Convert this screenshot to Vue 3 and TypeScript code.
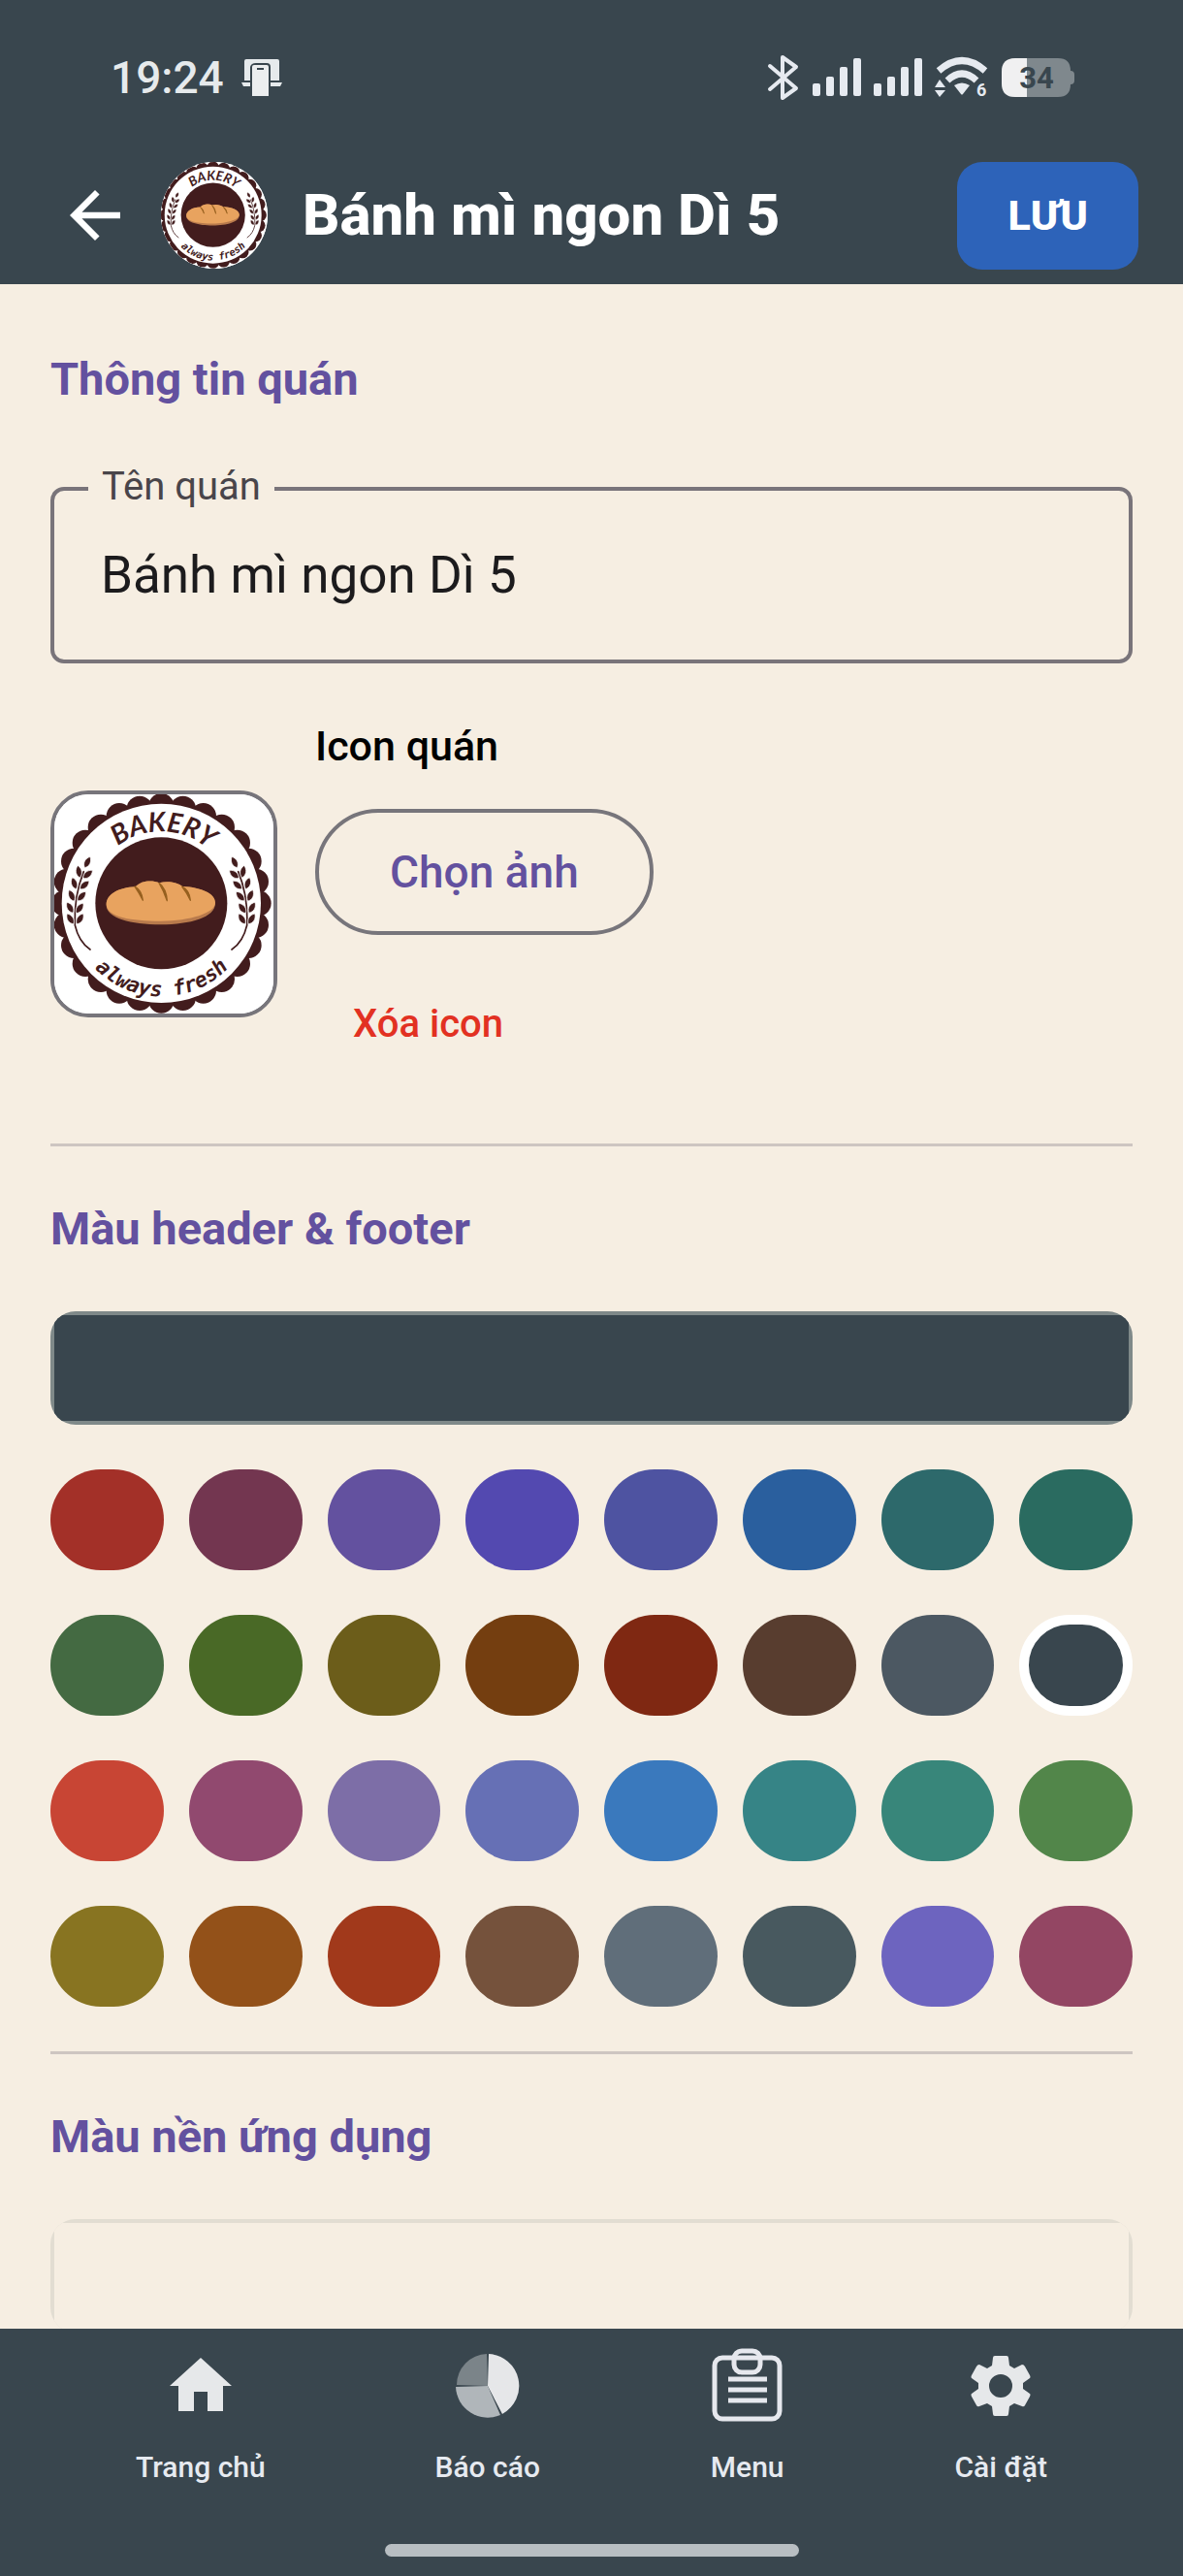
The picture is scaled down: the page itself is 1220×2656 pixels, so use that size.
<script setup lang="ts">
import { computed, ref } from 'vue'

const shopName = ref('Bánh mì ngon Dì 5')
const title = computed(() => shopName.value)

const headerColors: string[] = [
  '#a33028', '#733650', '#63519f', '#5349b0', '#4e53a1', '#2a5f9e', '#2d696b', '#2a6b60',
  '#446a42', '#496926', '#6c5d1a', '#743e10', '#7f2812', '#583d2f', '#4c5862', '#39464e',
  '#c84534', '#91496f', '#7d6ea7', '#6670b5', '#3a79bd', '#368486', '#38867a', '#52864a',
  '#887421', '#935119', '#a1391b', '#75523c', '#606e7a', '#48595f', '#6d64bf', '#934663',
]
const headerColor = ref('#39464e')
const appColor = ref('#f6eee2')

const scallops = Array.from({ length: 28 }, (_, i) => {
  const a = (i * 2 * Math.PI) / 28
  return { x: Math.round(380 + 300 * Math.sin(a)), y: Math.round(394 - 300 * Math.cos(a)) }
})

const leaves = [
  { x: 99, y: 443, a: -32 }, { x: 128, y: 443, a: 32 },
  { x: 98, y: 408, a: -30 }, { x: 127, y: 410, a: 36 },
  { x: 103, y: 371, a: -24 }, { x: 133, y: 373, a: 42 },
  { x: 111, y: 333, a: -18 }, { x: 142, y: 338, a: 48 },
  { x: 125, y: 297, a: -10 }, { x: 152, y: 305, a: 50 },
  { x: 151, y: 268, a: 26 },
]
</script>

<template>
  <div class="app">
    <svg class="defs" width="0" height="0" aria-hidden="true">
      <defs>
        <path id="arc-top" d="M158 394A222 222 0 0 1 602 394" />
        <path id="arc-bottom" d="M92 394A288 288 0 0 0 668 394" />
        <g id="wheat">
          <path d="M160 537C134 520 120 492 113 462C110 400 118 350 140 296" fill="none" stroke="#421c1d" stroke-width="5" stroke-linecap="round" />
          <path
            v-for="(l, i) in leaves"
            :key="i"
            d="M0 -20C12 -8 12 8 0 18C-12 8 -12 -8 0 -20Z"
            :transform="`translate(${l.x} ${l.y}) rotate(${l.a})`"
            fill="#421c1d"
            stroke="#fff"
            stroke-width="2"
          />
        </g>
        <symbol id="bakery" viewBox="49 57 678 678">
          <rect x="40" y="50" width="700" height="700" fill="#fff" />
          <circle cx="380" cy="394" r="315" fill="#421c1d" />
          <circle v-for="(s, i) in scallops" :key="i" :cx="s.x" :cy="s.y" r="40" fill="#421c1d" />
          <circle cx="380" cy="394" r="308" fill="#fff" />
          <circle cx="380" cy="394" r="204" fill="#421c1d" />
          <use href="#wheat" />
          <use href="#wheat" transform="translate(758 0) scale(-1 1)" />
          <g fill="#421c1d" font-style="italic" font-weight="700">
            <text font-family="Lato, sans-serif" font-size="84" text-anchor="middle"><textPath href="#arc-top" startOffset="51%">BAKERY</textPath></text>
            <text font-family="DejaVu Sans Mono, monospace" font-size="64"><textPath href="#arc-bottom" startOffset="223">always fresh</textPath></text>
          </g>
          <path d="M210 400C210 366 248 345 300 343C318 323 352 322 374 331C400 323 430 330 446 342C505 345 547 364 547 394C547 438 470 460 378 460C286 460 210 440 210 400Z" fill="#b87a4c" />
          <path d="M210 398C210 366 248 345 300 343C318 323 352 322 374 331C400 323 430 330 446 342C505 345 547 364 547 392C547 424 470 448 378 449C286 449 212 436 210 398Z" fill="#e8a35f" />
          <path d="M298 342Q320 354 323 385Q312 362 298 342ZM373 331Q396 350 398 386Q388 356 373 331ZM444 342Q468 354 470 385Q460 362 444 342Z" fill="#96601f" stroke="#96601f" stroke-width="4" stroke-linejoin="round" />
        </symbol>
      </defs>
    </svg>

    <header class="top">
      <div class="status">
        <div class="status-group">
          <span class="clock">19:24</span>
          <svg width="42" height="40" viewBox="0 0 42 40" aria-hidden="true">
            <path d="M5 1H37Q39 1 39 3V23H30V9Q30 5 26 5H15Q10 5 9 9V23H3V3Q3 1 5 1Z" fill="#e6eaec" />
            <path d="M0 25H9V29H2ZM30 25H42L40 29H30Z" fill="#e6eaec" />
            <path d="M13 7H26Q28 7 28 9V39H11V9Q11 7 13 7Z" fill="#eceeef" />
            <path d="M16 11H23" stroke="#39464e" stroke-width="2" />
          </svg>
        </div>
        <div class="status-group right">
          <svg width="34" height="48" viewBox="0 0 34 48" aria-hidden="true">
            <path d="M3 12L30 35L16 45V3L30 13L3 36" fill="none" stroke="#e6eaf0" stroke-width="4" stroke-linecap="round" stroke-linejoin="round" />
          </svg>
          <svg v-for="n in 2" :key="n" width="50" height="40" viewBox="0 0 50 40" fill="#e6eaf0" aria-hidden="true">
            <rect x="0" y="26" width="8" height="13" rx="2" />
            <rect x="14" y="19" width="8" height="20" rx="2" />
            <rect x="28" y="9" width="8" height="30" rx="2" />
            <rect x="42" y="0" width="8" height="39" rx="2" />
          </svg>
          <svg width="56" height="48" viewBox="0 -3 56 48" aria-hidden="true">
            <g fill="none" stroke="#e6eaf0" stroke-width="7">
              <path d="M4 14Q28 -7 52 14" />
              <path d="M13 24Q28 10 43 24" />
            </g>
            <path d="M20 29Q28 24 36 29L29 38Q28 39 27 38Z" fill="#e6eaf0" />
            <path d="M0 31L5 23L11 31ZM0 34H11L5 41Z" fill="#e6eaf0" />
            <text x="43" y="40" font-size="18" font-weight="700" font-family="Roboto, sans-serif" fill="#e6eaf0">6</text>
          </svg>
          <svg width="76" height="42" viewBox="0 0 76 42" aria-hidden="true">
            <path d="M14 1H58Q71 1 71 14V14Q75 14 75 18V24Q75 28 71 28Q71 41 58 41H14Q0 41 0 27V15Q0 1 14 1Z" fill="#7f888d" />
            <path d="M14 1H26V41H14Q0 41 0 27V15Q0 1 14 1Z" fill="#f0f0f1" />
            <text x="36" y="32" font-size="31" font-weight="700" text-anchor="middle" font-family="Roboto, sans-serif" fill="#39464e">34</text>
          </svg>
        </div>
      </div>
      <div class="appbar">
        <button class="back" type="button" aria-label="Quay lại">
          <svg width="78" height="78" viewBox="0 0 24 24" fill="#fff"><path d="M20 11H7.83l5.59-5.59L12 4l-8 8 8 8 1.41-1.41L7.83 13H20v-2z" /></svg>
        </button>
        <span class="avatar"><svg width="110" height="110"><use href="#bakery" /></svg></span>
        <h1 class="title">{{ title }}</h1>
        <button class="save" type="button">LƯU</button>
      </div>
    </header>

    <main class="content">
      <h2 class="heading">Thông tin quán</h2>
      <div class="field">
        <label class="field-label" for="shop-name">Tên quán</label>
        <input id="shop-name" v-model="shopName" class="field-input" type="text" />
      </div>

      <div class="icon-row">
        <div class="thumb"><svg width="100%" height="100%"><use href="#bakery" /></svg></div>
        <div class="icon-actions">
          <span class="icon-title">Icon quán</span>
          <button class="pick" type="button">Chọn ảnh</button>
          <button class="remove" type="button">Xóa icon</button>
        </div>
      </div>

      <hr class="rule" />
      <h2 id="header-color" class="heading">Màu header &amp; footer</h2>
      <div class="preview dark"><div class="preview-fill" :style="{ background: headerColor }"></div></div>
      <div class="swatches" role="radiogroup" aria-labelledby="header-color">
        <input
          v-for="c in headerColors"
          :key="c"
          v-model="headerColor"
          class="swatch"
          type="radio"
          name="header-color"
          :value="c"
          :aria-label="c"
          :style="{ backgroundColor: c }"
        />
      </div>

      <hr class="rule" />
      <h2 class="heading">Màu nền ứng dụng</h2>
      <div class="preview light"><div class="preview-fill" :style="{ background: appColor }"></div></div>
    </main>

    <footer class="bottom">
      <nav class="tabs">
        <a class="tab" href="#home">
          <svg width="78" height="78" viewBox="0 0 78 78" fill="#e6e8ea"><path d="M39 10L71 39H62V65H46V45H32V65H16V39H7Z" /></svg>
          <span>Trang chủ</span>
        </a>
        <a class="tab" href="#report">
          <svg width="78" height="78" viewBox="0 0 78 78">
            <path d="M40 6A33 33 0 0 1 54 68L39 39Z" fill="#e6e7e9" />
            <path d="M52 69A33 33 0 0 1 6 40L39 39Z" fill="#b0b6ba" />
            <path d="M7 38A32 32 0 0 1 38 6L39 39Z" fill="#7b8489" />
          </svg>
          <span>Báo cáo</span>
        </a>
        <a class="tab" href="#menu">
          <svg width="78" height="78" viewBox="0 0 78 78" fill="none" stroke="#e6e8ee">
            <rect x="5" y="10" width="67" height="63" rx="8" stroke-width="5" />
            <rect x="25" y="3" width="27" height="22" rx="8" stroke-width="5" />
            <path d="M19 32H59M19 43H59M19 54H59" stroke-width="5" />
          </svg>
          <span>Menu</span>
        </a>
        <a class="tab" href="#settings">
          <svg width="78" height="78" viewBox="0 0 78 78" fill="#e6e8ea" fill-rule="evenodd">
            <path d="M33 8H45Q47 8 47 10L48 18L53 21L61 17Q63 17 64 19L69 28Q70 30 69 31L62 36V42L69 47Q70 48 69 50L64 59Q63 61 61 60L53 57L48 60L47 68Q47 70 45 70H33Q31 70 31 68L30 60L25 57L17 60Q15 61 14 59L9 50Q8 48 9 47L16 42V36L9 31Q8 30 9 28L14 19Q15 17 17 17L25 21L30 18L31 10Q31 8 33 8ZM39 27A12 12 0 1 0 39 51A12 12 0 1 0 39 27Z" />
          </svg>
          <span>Cài đặt</span>
        </a>
      </nav>
      <div class="gesture"></div>
    </footer>
  </div>
</template>

<style>
body {
  margin: 0;
  background: #f6eee2;
}
</style>

<style scoped>
.app {
  display: flex;
  flex-direction: column;
  height: 100vh;
  font-family: Roboto, "Noto Sans", sans-serif;
  background: #f6eee2;
}
.defs {
  position: absolute;
}
button {
  font-family: inherit;
  margin: 0;
  padding: 0;
  border: 0;
  background: none;
  cursor: pointer;
}
.top {
  flex: none;
  padding-bottom: 9px;
  background: #39464e;
}
.status {
  display: flex;
  align-items: center;
  justify-content: space-between;
  height: 160px;
  padding: 0 111px 0 114px;
}
.status-group {
  display: flex;
  align-items: center;
  gap: 18px;
}
.status-group.right {
  gap: 13px;
}
.clock {
  font-size: 46px;
  line-height: 56px;
  font-weight: 500;
  color: #e6eaec;
}
.appbar {
  display: flex;
  align-items: center;
  height: 124px;
  padding: 0 46px 0 59px;
}
.back {
  display: flex;
  margin-right: 29px;
}
.avatar {
  display: flex;
  flex: none;
  width: 110px;
  height: 110px;
  border-radius: 50%;
  overflow: hidden;
  background: #fff;
}
.title {
  flex: 1;
  margin: 0 0 0 36px;
  font-size: 60px;
  line-height: 72px;
  font-weight: 800;
  color: #fff;
  white-space: nowrap;
}
.save {
  height: 111px;
  padding: 0 52px;
  border-radius: 26px;
  background: #2d63b9;
  color: #fff;
  font-size: 43px;
  font-weight: 800;
}
.content {
  flex: 1;
  min-height: 0;
  overflow-y: auto;
  scrollbar-width: none;
  padding: 65px 52px 0;
}
.heading {
  margin: 0;
  font-size: 47px;
  line-height: 65px;
  font-weight: 700;
  color: #63519f;
}
.field {
  position: relative;
  margin: 79px 0 59px;
}
.field-label {
  position: absolute;
  top: -26px;
  left: 39px;
  padding: 0 14px;
  background: #f6eee2;
  font-size: 40px;
  line-height: 52px;
  color: #49454a;
}
.field-input {
  display: block;
  box-sizing: border-box;
  width: 100%;
  height: 182px;
  padding: 0 48px;
  border: 4px solid #79747a;
  border-radius: 14px;
  background: transparent;
  font-family: inherit;
  font-size: 53px;
  color: #1c1b1d;
  outline: none;
}
.icon-row {
  display: flex;
  align-items: center;
  gap: 39px;
  margin-bottom: 59px;
}
.thumb {
  flex: none;
  box-sizing: border-box;
  width: 234px;
  height: 234px;
  border: 4px solid #77757b;
  border-radius: 39px;
  overflow: hidden;
  background: #fff;
}
.thumb svg {
  display: block;
}
.icon-actions {
  display: flex;
  flex-direction: column;
  align-items: flex-start;
}
.icon-title {
  margin-bottom: 39px;
  font-size: 43px;
  line-height: 52px;
  font-weight: 500;
  color: #000;
}
.pick {
  height: 130px;
  margin-bottom: 26px;
  padding: 0 73px;
  border: 4px solid #77757b;
  border-radius: 65px;
  font-size: 46px;
  font-weight: 500;
  color: #63519f;
}
.remove {
  height: 130px;
  padding: 0 39px;
  font-size: 40px;
  font-weight: 500;
  color: #e23122;
}
.rule {
  height: 3px;
  margin: 0 0 52px;
  border: 0;
  background: #cdc5c1;
}
.preview {
  box-sizing: border-box;
  height: 117px;
  margin-top: 53px;
  padding: 4px;
  border-radius: 26px;
  overflow: hidden;
}
.preview-fill {
  height: 100%;
}
.dark {
  background: #7f8989;
}
.light {
  background: #e2ddd2;
}
.swatches {
  display: grid;
  grid-template-columns: repeat(8, 1fr);
  gap: 46px 26px;
  margin: 46px 0;
}
.swatch {
  appearance: none;
  box-sizing: border-box;
  width: 100%;
  height: 104px;
  margin: 0;
  border-radius: 52px;
  cursor: pointer;
}
.swatch:checked {
  border: 10px solid #fff;
}
.bottom {
  flex: none;
  padding: 20px 0;
  background: #39464e;
}
.tabs {
  display: flex;
  justify-content: space-between;
  padding: 0 140px;
}
.tab {
  display: flex;
  flex-direction: column;
  align-items: center;
  gap: 25px;
  font-size: 30px;
  line-height: 40px;
  font-weight: 500;
  color: #e6eaf0;
  text-decoration: none;
}
.gesture {
  width: 35%;
  height: 13px;
  margin: 59px auto 0;
  border-radius: 7px;
  background: #b8bec2;
}
</style>
